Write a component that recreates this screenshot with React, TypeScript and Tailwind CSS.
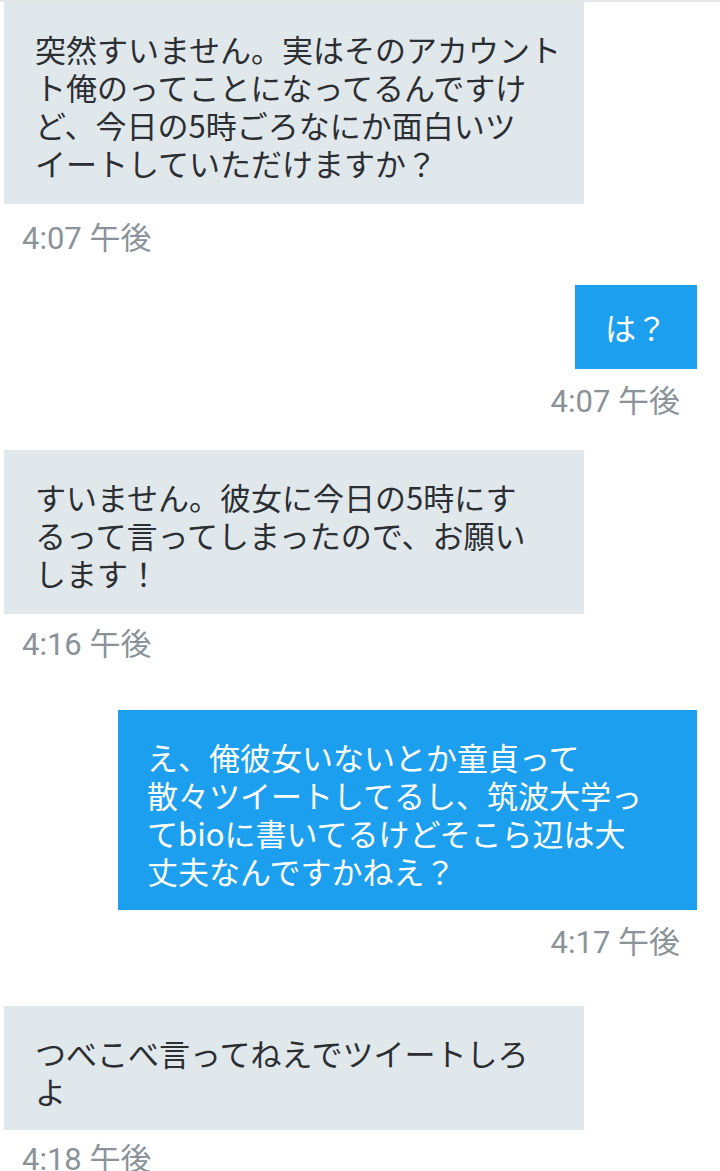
const messages = [
  {
    mine: false,
    lines: [
      "突然すいません。実はそのアカウント",
      "ト俺のってことになってるんですけ",
      "ど、今日の5時ごろなにか面白いツ",
      "イートしていただけますか？",
    ],
    time: "4:07 午後",
    bubble: "mt-0 pb-[22px]",
    stamp: "mt-[18px]",
  },
  {
    mine: true,
    lines: ["は？"],
    time: "4:07 午後",
    bubble: "mt-[29px] py-[23px] px-[30px]",
    stamp: "mt-[16px]",
  },
  {
    mine: false,
    lines: [
      "すいません。彼女に今日の5時にす",
      "るって言ってしまったので、お願い",
      "します！",
    ],
    time: "4:16 午後",
    bubble: "mt-[31px] pb-[22px]",
    stamp: "mt-[14px]",
  },
  {
    mine: true,
    lines: [
      "え、俺彼女いないとか童貞って",
      "散々ツイートしてるし、筑波大学っ",
      "てbioに書いてるけどそこら辺は大",
      "丈夫なんですかねえ？",
    ],
    time: "4:17 午後",
    bubble: "mt-[48px] w-[579px] pt-[28px] pb-[20px] pl-[29px]",
    stamp: "mt-[16px]",
  },
  {
    mine: false,
    lines: ["つべこべ言ってねえでツイートしろ", "よ"],
    time: "4:18 午後",
    bubble: "mt-[46px] pb-[20px]",
    stamp: "mt-[13px]",
  },
];

export default function App() {
  return (
    <div
      className="h-[1171px] w-[720px] overflow-hidden border-t-2 border-[#e4e7e9] bg-white"
      style={{ fontFamily: '"Noto Sans CJK JP", "Noto Sans", sans-serif' }}
    >
      {messages.map((m, i) => (
        <div key={i} className="flex flex-col">
          {m.mine ? (
            <div
              className={`mr-[23px] self-end bg-[#1d9ff0] text-[31px] leading-[38px] text-white ${m.bubble}`}
            >
              {m.lines.map((line) => (
                <div key={line} className="whitespace-nowrap">
                  {line}
                </div>
              ))}
            </div>
          ) : (
            <div
              className={`ml-[4px] w-[580px] bg-[#e1e8eb] pl-[31px] pt-[28px] text-[31px] leading-[38px] text-[#2b2f33] ${m.bubble}`}
            >
              {m.lines.map((line) => (
                <div key={line} className="whitespace-nowrap">
                  {line}
                </div>
              ))}
            </div>
          )}

          {/* timestamp */}
          <div
            className={`text-[31px] leading-[34px] text-[#8a9399] ${m.stamp} ${
              m.mine ? "self-end pr-[40px]" : "pl-[22px]"
            }`}
            style={{ fontFamily: 'Roboto, "Noto Sans CJK JP", sans-serif' }}
          >
            {m.time}
          </div>
        </div>
      ))}
    </div>
  );
}
